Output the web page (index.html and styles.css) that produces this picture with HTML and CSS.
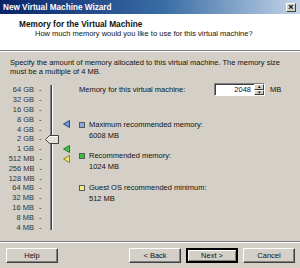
FILE: index.html
```html
<!DOCTYPE html>
<html lang="en">
<head>
  <meta charset="UTF-8" />
  <title>New Virtual Machine Wizard</title>
  <link rel="stylesheet" href="styles.css">
</head>
<body>
  <div class="window">
    <div class="titlebar">
      <span class="title">New Virtual Machine Wizard</span>
      <span class="close">&times;</span>
    </div>

    <div class="header">
      <h1>Memory for the Virtual Machine</h1>
      <p class="subtitle">How much memory would you like to use for this virtual machine?</p>
    </div>
    <div class="rule"></div>

    <div class="content">
      <p class="intro">Specify the amount of memory allocated to this virtual machine. The memory size must be a multiple of 4 MB.</p>

      <div class="main">
        <!-- escala del slider -->
        <div class="slider">
          <ul class="scale">
            <li>64 GB <span class="tick">-</span></li>
            <li>32 GB <span class="tick">-</span></li>
            <li>16 GB <span class="tick">-</span></li>
            <li>8 GB <span class="tick">-</span></li>
            <li>4 GB <span class="tick">-</span></li>
            <li>2 GB <span class="tick">-</span></li>
            <li>1 GB <span class="tick">-</span></li>
            <li>512 MB <span class="tick">-</span></li>
            <li>256 MB <span class="tick">-</span></li>
            <li>128 MB <span class="tick">-</span></li>
            <li>64 MB <span class="tick">-</span></li>
            <li>32 MB <span class="tick">-</span></li>
            <li>16 MB <span class="tick">-</span></li>
            <li>8 MB <span class="tick">-</span></li>
            <li>4 MB <span class="tick">-</span></li>
          </ul>
          <div class="groove"></div>
          <div class="marks">
            <svg class="mark" style="top:35.3px" width="7" height="8" viewBox="0 0 7 8"><polygon points="0.5,4 6.5,0.5 6.5,7.5" fill="#6f94d6" stroke="#2d4f8c" stroke-width="1"/></svg>
            <svg class="mark" style="top:60.3px" width="7" height="8" viewBox="0 0 7 8"><polygon points="0.5,4 6.5,0.5 6.5,7.5" fill="#49c24a" stroke="#1f7a20" stroke-width="1"/></svg>
            <svg class="mark" style="top:70.1px" width="7" height="8" viewBox="0 0 7 8"><polygon points="0.5,4 6.5,0.5 6.5,7.5" fill="#f2ea70" stroke="#8c8420" stroke-width="1"/></svg>
          </div>
          <svg class="thumb" width="14" height="9" viewBox="0 0 14 9">
            <polygon points="0.5,4.5 4.5,0.5 13.5,0.5 13.5,8.5 4.5,8.5" fill="#e4e1da" stroke="#404040" stroke-width="1"/>
            <polyline points="1.8,4.5 4.9,1.5 12.5,1.5" fill="none" stroke="#ffffff" stroke-width="1"/>
          </svg>
        </div>

        <div class="info">
          <div class="memory-row">
            <label class="memory-label">Memory for this virtual machine:</label>
            <div class="spin">
              <span class="spin-value">2048</span>
              <span class="spin-buttons">
                <span class="spin-btn">&#9652;</span>
                <span class="spin-btn">&#9662;</span>
              </span>
            </div>
            <span class="unit">MB</span>
          </div>

          <div class="legend legend-max">
            <span class="swatch swatch-blue"></span>
            <div>Maximum recommended memory:<br>6008 MB</div>
          </div>
          <div class="legend legend-rec">
            <span class="swatch swatch-green"></span>
            <div>Recommended memory:<br>1024 MB</div>
          </div>
          <div class="legend legend-min">
            <span class="swatch swatch-yellow"></span>
            <div>Guest OS recommended minimum:<br>512 MB</div>
          </div>
        </div>
      </div>
    </div>

    <div class="rule"></div>
    <div class="footer">
      <button class="btn">Help</button>
      <div class="nav">
        <button class="btn">&lt; Back</button>
        <button class="btn btn-default">Next &gt;</button>
        <button class="btn">Cancel</button>
      </div>
    </div>
  </div>
</body>
</html>
```

FILE: styles.css
```css
body {
    margin: 0;
    background: #d4d0c8;
    font-family: 'Liberation Sans', Arial, sans-serif;
    font-size: 7.5px;
    color: #111;
}

.window {
    width: 300px;
    height: 268px;
    display: flex;
    flex-direction: column;
    overflow: hidden;
}

/* Barra de titulo */
.titlebar {
    height: 14px;
    flex: none;
    display: flex;
    align-items: center;
    justify-content: space-between;
    padding: 0 4px 0 3px;
    background: linear-gradient(90deg, #0a246a 0%, #3a6ea5 55%, #c4d4e8 100%);
    color: #fff;
}

.title {
    font-weight: bold;
    font-size: 8.2px;
}

.close {
    width: 10px;
    height: 9px;
    box-sizing: border-box;
    background: #d4d0c8;
    border: 1px solid;
    border-color: #fff #404040 #404040 #fff;
    color: #000;
    font-size: 9px;
    line-height: 6px;
    text-align: center;
    font-weight: bold;
}

/* Cabecera blanca */
.header {
    height: 36px;
    flex: none;
    box-sizing: border-box;
    background: #fff;
    padding: 5px 0 0 19px;
}

.header h1 {
    margin: 0;
    font-size: 8.3px;
    line-height: 10px;
    font-weight: bold;
}

.subtitle {
    margin: 0 0 0 16px;
    line-height: 10px;
}

.rule {
    flex: none;
    height: 0;
    border-top: 1px solid #808080;
    border-bottom: 1px solid #fff;
}

.content {
    flex: 1;
    padding: 6px 10px 0 10px;
}

.intro {
    margin: 0;
    line-height: 9px;
}

.main {
    display: flex;
    align-items: flex-start;
    margin-top: 7px;
}

/* Slider vertical */
.slider {
    position: relative;
    display: flex;
    margin-top: 2px;
}

.scale {
    list-style: none;
    margin: 0;
    padding: 0;
    width: 33px;
    color: #333;
}

.scale li {
    display: flex;
    justify-content: flex-end;
    align-items: center;
    gap: 5px;
    height: 9.8px;
    padding-right: 1px;
    white-space: nowrap;
}

.tick {
    width: 3px;
}

.groove {
    margin-left: 7px;
    width: 1px;
    height: 145px;
    border-left: 1px solid #808080;
    border-right: 1px solid #fff;
    background: #404040;
}

.marks {
    position: relative;
    width: 17px;
}

.mark {
    position: absolute;
    left: 10px;
    display: block;
}

.thumb {
    position: absolute;
    left: 35px;
    top: 49.5px;
    display: block;
}

/* Columna derecha */
.info {
    margin-left: 9px;
    flex: 1;
}

.memory-row {
    display: flex;
    align-items: center;
    height: 13px;
}

.memory-label {
    width: 135px;
}

.spin {
    display: flex;
    width: 51px;
    height: 13px;
    box-sizing: border-box;
    background: #fff;
    border: 1px solid;
    border-color: #808080 #fff #fff #808080;
    box-shadow: inset 1px 1px 0 #404040;
}

.spin-value {
    flex: 1;
    text-align: right;
    line-height: 11px;
    padding-right: 3px;
}

.spin-buttons {
    display: flex;
    flex-direction: column;
    width: 10px;
}

.spin-btn {
    flex: 1;
    background: #d4d0c8;
    border: 1px solid;
    border-color: #fff #404040 #404040 #fff;
    font-size: 5px;
    line-height: 3px;
    text-align: center;
    overflow: hidden;
}

.unit {
    margin-left: 5px;
}

.legend {
    display: flex;
    align-items: flex-start;
    gap: 4px;
    line-height: 10.5px;
}

.legend-max {
    margin-top: 24px;
}

.legend-rec {
    margin-top: 10px;
}

.legend-min {
    margin-top: 11px;
}

.swatch {
    width: 6px;
    height: 6px;
    box-sizing: border-box;
    margin-top: 2px;
    border: 1px solid #5a5a5a;
}

.swatch-blue { background: #88a8e0; }
.swatch-green { background: #3cbd3c; }
.swatch-yellow { background: #f4ee84; }

/* Botones inferiores */
.footer {
    flex: none;
    display: flex;
    justify-content: space-between;
    padding: 5px 5px 5px 6px;
}

.nav {
    display: flex;
    gap: 5px;
}

.btn {
    width: 52px;
    height: 15px;
    padding: 0;
    background: #d4d0c8;
    border: 1px solid;
    border-color: #fff #404040 #404040 #fff;
    box-shadow: inset -1px -1px 0 #808080;
    font-family: inherit;
    font-size: 7.5px;
    color: #111;
}

.btn-default {
    outline: 1px solid #000;
    outline-offset: -1px;
    border-width: 2px;
    border-color: #000;
    box-shadow: inset 1px 1px 0 #fff, inset -1px -1px 0 #808080;
}
```
